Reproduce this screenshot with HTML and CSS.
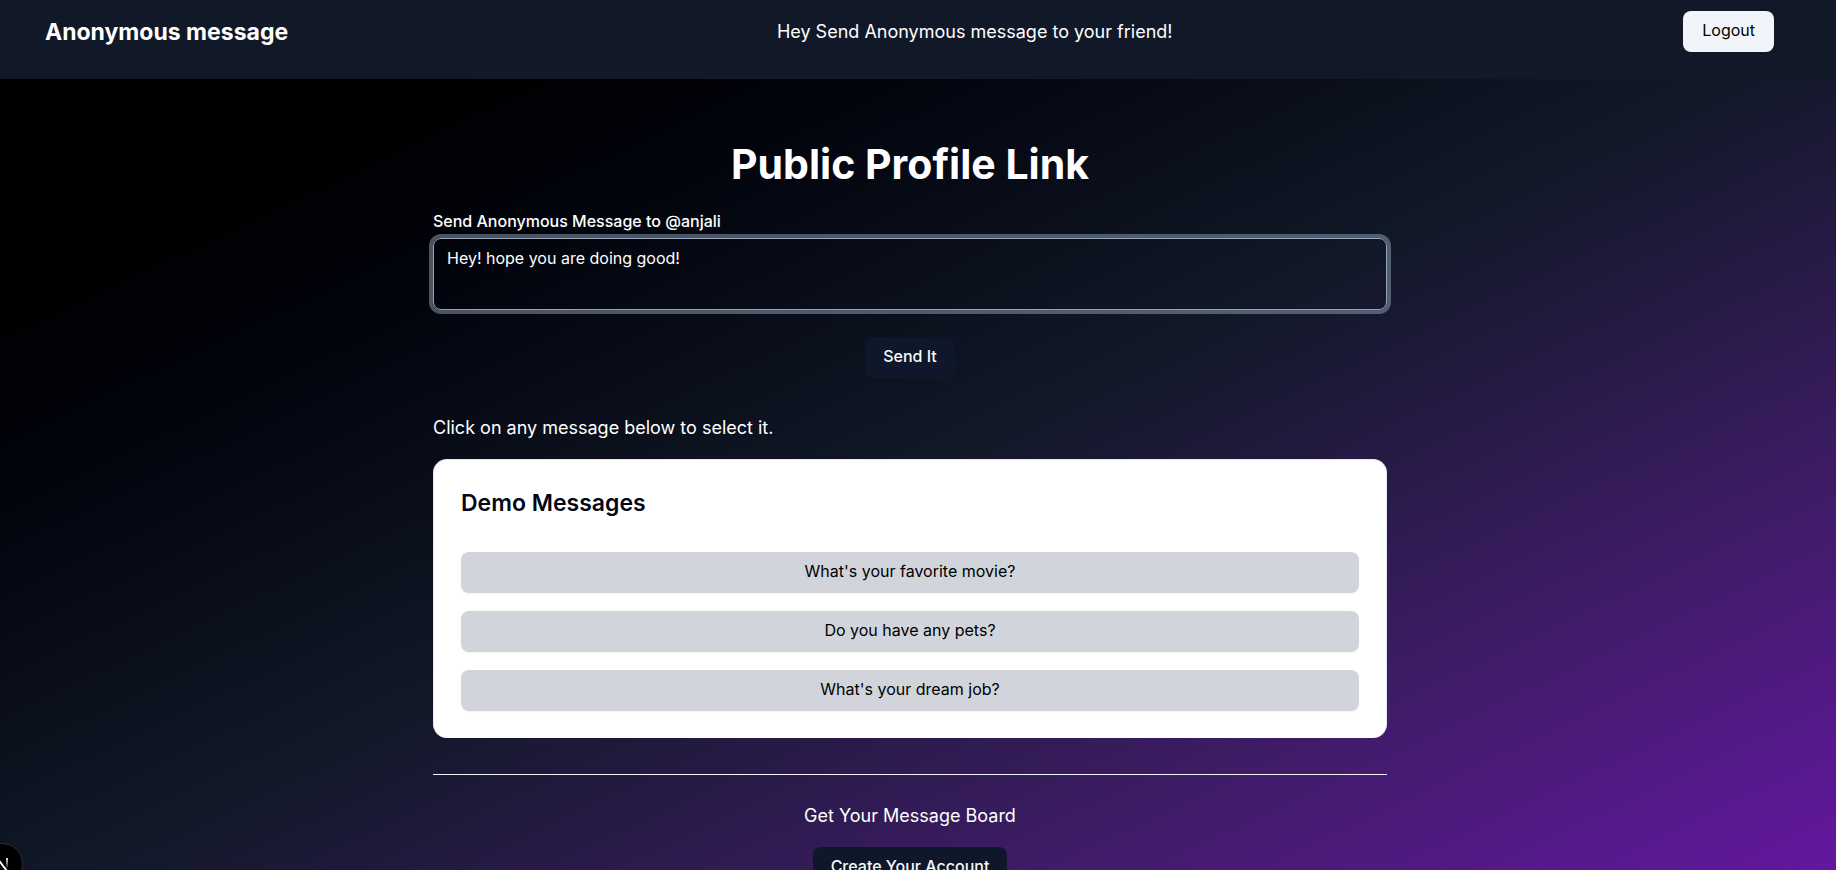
FILE: index.html
```html
<!DOCTYPE html>
<html lang="en">
<head>
<meta charset="utf-8">
<meta name="viewport" content="width=device-width, initial-scale=1">
<title>Anonymous message</title>
<link rel="stylesheet" href="styles.css">
</head>
<body>
<header class="navbar">
  <a class="brand" href="#">Anonymous message</a>
  <span class="tagline">Hey Send Anonymous message to your friend!</span>
  <button class="btn btn-light" type="button">Logout</button>
</header>
<main class="page">
  <div class="content">
    <h1 class="title">Public Profile Link</h1>
    <form class="message-form">
      <label class="label" for="message">Send Anonymous Message to @anjali</label>
      <textarea class="textarea" id="message">Hey! hope you are doing good!</textarea>
      <button class="btn btn-dark" type="button">Send It</button>
    </form>
    <p class="hint">Click on any message below to select it.</p>
    <section class="card">
      <h2 class="card-title">Demo Messages</h2>
      <div class="messages">
        <button class="btn btn-message" type="button">What's your favorite movie?</button>
        <button class="btn btn-message" type="button">Do you have any pets?</button>
        <button class="btn btn-message" type="button">What's your dream job?</button>
      </div>
    </section>
    <hr class="separator">
    <section class="signup">
      <p class="signup-text">Get Your Message Board</p>
      <a class="btn btn-dark" href="#">Create Your Account</a>
    </section>
  </div>
</main>
<button class="dev-badge" type="button" aria-label="Open developer tools">
  <svg width="40" height="40" viewBox="0 0 40 40" fill="none" aria-hidden="true">
    <defs>
      <linearGradient id="stem" x1="0" y1="13" x2="0" y2="25" gradientUnits="userSpaceOnUse">
        <stop stop-color="#fff"/><stop offset="1" stop-color="#fff" stop-opacity="0"/>
      </linearGradient>
    </defs>
    <path d="M15 27V14L28 31" stroke="#fff" stroke-width="2"/>
    <path d="M25 14V25" stroke="url(#stem)" stroke-width="2"/>
  </svg>
</button>
</body>
</html>
```
FILE: styles.css
```css
* {
  box-sizing: border-box;
  margin: 0;
}

body {
  font-family: Inter, "Liberation Sans", sans-serif;
  font-size: 18px;
  line-height: 28px;
  color: #fff;
  background: #000;
}

.navbar {
  display: flex;
  justify-content: space-between;
  align-items: center;
  padding: 11px 62px 27px 45px;
  background: #111827;
}

.brand {
  font-size: 23px;
  font-weight: 700;
  color: #fff;
  text-decoration: none;
}

.tagline {
  margin-right: 22px;
}

.btn {
  display: inline-flex;
  align-items: center;
  justify-content: center;
  padding: 9px 18px 11px;
  border: 0;
  border-radius: 8px;
  font-family: inherit;
  font-size: 16px;
  font-weight: 500;
  line-height: 21px;
  text-decoration: none;
  cursor: pointer;
}

.btn-light {
  padding: 9px 19px 11px;
  background: #f1f5f9;
  color: #000;
  font-weight: 400;
}

.btn-dark {
  background: #0f172a;
  color: #f8fafc;
}

.btn-message {
  width: 100%;
  background: #d1d5db;
  color: #000;
  font-weight: 400;
  box-shadow: 0 1px 2px rgba(0, 0, 0, 0.05);
}

.page {
  padding: 62px 16px 64px 0;
  background: linear-gradient(to bottom right, #000 0%, #000 12%, #02040d 24%, #111827 47%, #3e1c66 73%, #6b16ab 100%);
}

.content {
  width: 92%;
  max-width: 954px;
  margin: 0 auto;
  display: flex;
  flex-direction: column;
}

.title {
  font-size: 41px;
  font-weight: 700;
  line-height: 46px;
  text-align: center;
}

.message-form {
  display: flex;
  flex-direction: column;
  align-items: center;
  margin-top: 24px;
}

.label {
  align-self: stretch;
  font-size: 16px;
  font-weight: 500;
  line-height: 20px;
}

.textarea {
  display: block;
  width: 100%;
  height: 72px;
  margin: 7px 0 27px;
  padding: 8px 13px;
  border: 1px solid #94a3b8;
  border-radius: 8px;
  outline: none;
  box-shadow: 0 0 0 4px rgba(148, 163, 184, 0.5);
  background: transparent;
  color: #fff;
  font-family: inherit;
  font-size: 16px;
  line-height: 23px;
  resize: none;
}

.hint {
  margin-top: 36px;
}

.card {
  margin-top: 17px;
  padding: 27px;
  border: 1px solid #e2e8f0;
  border-bottom-width: 0;
  border-radius: 14px;
  background: #fff;
  color: #020617;
}

.card-title {
  font-size: 23px;
  font-weight: 600;
  line-height: 32px;
}

.messages {
  display: flex;
  flex-direction: column;
  gap: 18px;
  margin-top: 33px;
}

.separator {
  width: 100%;
  height: 1px;
  margin: 36px 0 27px;
  border: 0;
  background: #f1f5f9;
}

.signup {
  display: flex;
  flex-direction: column;
  align-items: center;
  gap: 17px;
}

.dev-badge {
  position: fixed;
  left: -18px;
  bottom: -14px;
  width: 40px;
  height: 40px;
  padding: 0;
  border: 0;
  border-radius: 50%;
  background: #000;
  box-shadow: 0 0 0 1px #2a2a2a;
  overflow: hidden;
}
```
